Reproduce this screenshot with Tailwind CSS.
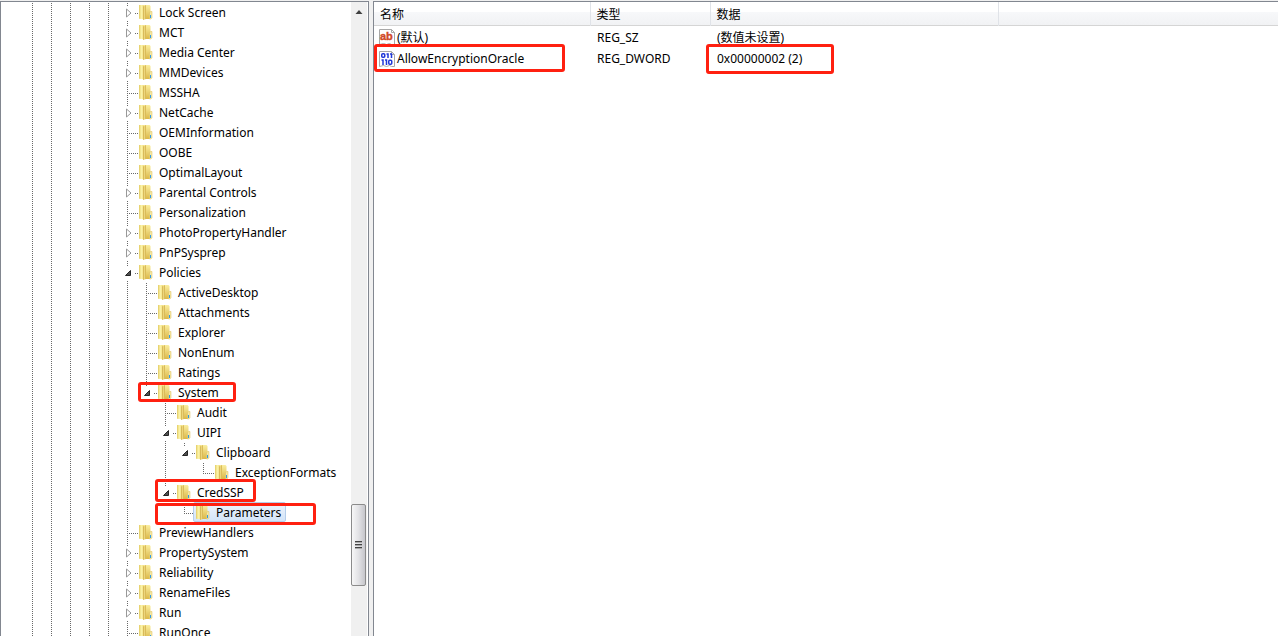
<!DOCTYPE html>
<html lang="zh-CN">
<head>
  <meta charset="UTF-8" />
  <meta name="viewport" content="width=device-width, initial-scale=1" />
  <title>注册表编辑器</title>
  <script src="https://cdn.jsdelivr.net/npm/@tailwindcss/browser@4"></script>
</head>
<body class="h-screen overflow-hidden bg-[#f0f0f0] pt-px flex gap-1 text-black text-[12px] leading-5 font-['Noto_Sans','Noto_Sans_CJK_SC',sans-serif]">

  <svg class="absolute size-0">
    <defs>
      <linearGradient id="leaf" x1="0" x2="1" y1="0" y2="0">
        <stop offset="0" stop-color="#e2ca62" />
        <stop offset="0.45" stop-color="#fcf4a8" />
        <stop offset="1" stop-color="#f0dc80" />
      </linearGradient>
      <linearGradient id="back" x1="0" x2="0" y1="0" y2="1">
        <stop offset="0" stop-color="#faeea0" />
        <stop offset="1" stop-color="#dcb848" />
      </linearGradient>
      <linearGradient id="spine" x1="0" x2="1" y1="0" y2="0">
        <stop offset="0" stop-color="#cfac48" />
        <stop offset="0.5" stop-color="#ecd67c" />
        <stop offset="1" stop-color="#d2ae48" />
      </linearGradient>
    </defs>
    <symbol id="folder" viewBox="0 0 16 16">
      <path d="M6 1h5.500l1 1v13H6z" fill="url(#back)" />
      <path d="M11.500 9l1-1.500H14V13.500l-1 1.500h-1.500z" fill="#f6e8a4" stroke="#d8bc5c" stroke-width="0.5" />
      <path d="M1 1h5v14.300L1 14.700z" fill="url(#leaf)" />
      <path d="M5 2.500L8 1v14L5 16z" fill="url(#spine)" />
      <path d="M12 11h1v3h-1z" fill="#2f9ae8" />
    </symbol>
    <symbol id="closed" viewBox="0 0 19 20">
      <path d="M8.500 7v8l4.500-4z" fill="#fff" stroke="#989898" />
    </symbol>
    <symbol id="opened" viewBox="0 0 19 20">
      <path d="M12.500 8.500v5H7.500z" fill="#505050" stroke="#262626" />
    </symbol>
  </svg>

  <aside class="relative w-[369px] shrink-0 flex border border-b-0 border-[#828790] bg-white">
    <ul id="tree" class="flex-1 pl-[22px]" role="tree"></ul>

    <div class="w-4 shrink-0 mr-px flex flex-col bg-[#f0f0f0]">
      <div class="h-5 flex items-center justify-center">
        <svg class="w-2 h-1" viewBox="0 0 8 4"><path d="M4 0L7.500 4h-7z" fill="#404040" /></svg>
      </div>
      <div class="flex-1 pt-[482px]">
        <div class="h-[82px] mr-px rounded-xs border border-[#8b8b8b] bg-linear-to-r from-[#f7f7f7] via-[#e2e2e5] to-[#c6c6cb] flex flex-col items-center justify-center gap-px">
          <span class="w-[7px] h-0.5 border-t border-[#444] bg-[#aaa]"></span>
          <span class="w-[7px] h-0.5 border-t border-[#444] bg-[#aaa]"></span>
          <span class="w-[7px] h-0.5 border-t border-[#444] bg-[#aaa]"></span>
        </div>
      </div>
    </div>
  </aside>

  <main class="flex-1 border-t border-l border-[#828790] bg-white">
    <table class="w-full table-fixed text-left">
      <thead>
        <tr class="h-[23px] bg-linear-to-b from-white from-45% via-[#f7f8fa] via-45% to-[#f1f2f4] border-b border-[#d5d5d5]">
          <th class="w-[216px] pt-[3px] pl-1.5 font-normal border-r border-[#e0e3e8]">名称</th>
          <th class="w-[120px] pt-[3px] pl-1.5 font-normal border-r border-[#e0e3e8]">类型</th>
          <th class="w-[288px] pt-[3px] pl-1.5 font-normal border-r border-[#e0e3e8]">数据</th>
          <th></th>
        </tr>
      </thead>
      <tbody>
        <tr class="h-[23px]">
          <td class="pl-[5px]">
            <div class="flex items-center gap-0.5">
              <svg class="size-4" viewBox="0 0 16 16">
                <path d="M0.500 0.500h12l3 3v12h-3l-2-1-3 1-3-1-4 1z" fill="#fff" stroke="#a8a8a8" />
                <path d="M12.500 0.500v3h3" fill="none" stroke="#a8a8a8" />
                <text x="1" y="11" font-family="Liberation Sans" font-size="11" font-weight="700" fill="#d04a28" stroke="#d04a28" stroke-width="0.4">ab</text>
              </svg>
              <span class="pt-0.5">(默认)</span>
            </div>
          </td>
          <td class="pt-0.5 pl-[7px]">REG_SZ</td>
          <td class="pt-0.5 pl-[7px]">(数值未设置)</td>
          <td></td>
        </tr>
        <tr class="h-5">
          <td class="relative pl-[5px]">
            <div class="flex items-center gap-0.5">
              <svg class="size-4" viewBox="0 0 16 16">
                <path d="M0.500 0.500h12l3 3v12h-3l-2-1-3 1-3-1-4 1z" fill="#fff" stroke="#a8a8a8" />
                <path d="M12.500 0.500v3h3" fill="none" stroke="#a8a8a8" />
                <g fill="none" stroke="#2038d8" stroke-width="1.500">
                  <rect x="2.750" y="2.750" width="3" height="3.500" rx="1" />
                  <path d="M7.500 3H9v4M11 3h1.500v4M2.500 9H4v5M6 9h1.500v5" />
                  <rect x="9.750" y="9.250" width="3" height="4" rx="1" />
                </g>
              </svg>
              <span>AllowEncryptionOracle</span>
            </div>
            <span class="absolute -top-[5px] left-0 w-[191px] h-7 border-3 border-[#ff2010] rounded-[3px]"></span>
          </td>
          <td class="pl-[7px]">REG_DWORD</td>
          <td class="relative pl-[7px]">0x00000002 (2)
            <span class="absolute -top-[5px] -left-1 w-32 h-[30px] border-3 border-[#ff2010] rounded-[3px]"></span>
          </td>
          <td></td>
        </tr>
      </tbody>
    </table>
  </main>

  <script>
    // [depth, name, state, last child?]  state: "+" closed, "-" open, "" leaf
    const keys = [
      [0, "Lock Screen", "+"],
      [0, "MCT", "+"],
      [0, "Media Center", "+"],
      [0, "MMDevices", "+"],
      [0, "MSSHA", ""],
      [0, "NetCache", "+"],
      [0, "OEMInformation", ""],
      [0, "OOBE", ""],
      [0, "OptimalLayout", ""],
      [0, "Parental Controls", "+"],
      [0, "Personalization", ""],
      [0, "PhotoPropertyHandler", "+"],
      [0, "PnPSysprep", "+"],
      [0, "Policies", "-"],
      [1, "ActiveDesktop", ""],
      [1, "Attachments", ""],
      [1, "Explorer", ""],
      [1, "NonEnum", ""],
      [1, "Ratings", ""],
      [1, "System", "-", true],
      [2, "Audit", ""],
      [2, "UIPI", "-"],
      [3, "Clipboard", "-", true],
      [4, "ExceptionFormats", "", true],
      [2, "CredSSP", "-", true],
      [3, "Parameters", "", true],
      [0, "PreviewHandlers", ""],
      [0, "PropertySystem", "+"],
      [0, "Reliability", "+"],
      [0, "RenameFiles", "+"],
      [0, "Run", "+"],
      [0, "RunOnce", ""],
    ];

    const marks = {
      System: "absolute top-0 left-[115px] w-[98px] h-5 border-3 border-[#ff2010] rounded-[3px]",
      CredSSP: "absolute -top-[3px] left-[132px] w-[101px] h-[23px] border-3 border-[#ff2010] rounded-[3px]",
      Parameters: "absolute top-px left-[132px] w-[161px] h-[22px] border-3 border-[#ff2010] rounded-[3px]",
    };

    const cell = body => `<svg class="w-[19px] h-5 shrink-0 overflow-visible" viewBox="0 0 19 20" stroke-dasharray="1 1" shape-rendering="crispEdges">${body}</svg>`;
    const dots = d => `<path d="${d}" fill="none" stroke="#686868" />`;
    const icon = id => `<use href="#${id}" width="19" height="20" stroke-dasharray="none" shape-rendering="auto" />`;

    const open = [true];
    let html = "";
    keys.forEach(([depth, name, state, last]) => {
      let cells = "";
      for (let i = 0; i < 5; i++) cells += cell(dots("M9.5 1V20"));
      for (let i = 0; i < depth; i++) cells += cell(open[i] ? dots("M9.5 1V20") : "");
      open[depth] = !last;

      if (state) {
        cells += cell(dots("M9.5 1V5") + (last ? "" : dots("M9.5 19V20")) + dots("M17 11.5H20") + icon(state === "+" ? "closed" : "opened"));
      } else {
        cells += cell(dots(last ? "M9.5 1V11" : "M9.5 1V20") + dots("M9 11.5H20"));
      }

      const selected = name === "Parameters";
      const label = selected
        ? "flex items-center h-5 -ml-px pl-px pr-1 border border-[#b4cdea] rounded-xs bg-linear-to-b from-[#eef4fc] to-[#d3e4f8]"
        : "flex items-center h-5 -ml-px pl-px pr-1 border border-transparent";
      html += `
        <li class="relative flex h-5 whitespace-nowrap" role="treeitem" aria-selected="${selected}">
          ${cells}
          <span class="${label}">
            <svg class="size-4 mr-[5px]"><use href="#folder" /></svg>
            <span class="pt-0.5">${name}</span>
          </span>
          ${marks[name] ? `<span class="${marks[name]}"></span>` : ""}
        </li>`;
    });
    document.getElementById("tree").innerHTML = html;
  </script>
</body>
</html>
